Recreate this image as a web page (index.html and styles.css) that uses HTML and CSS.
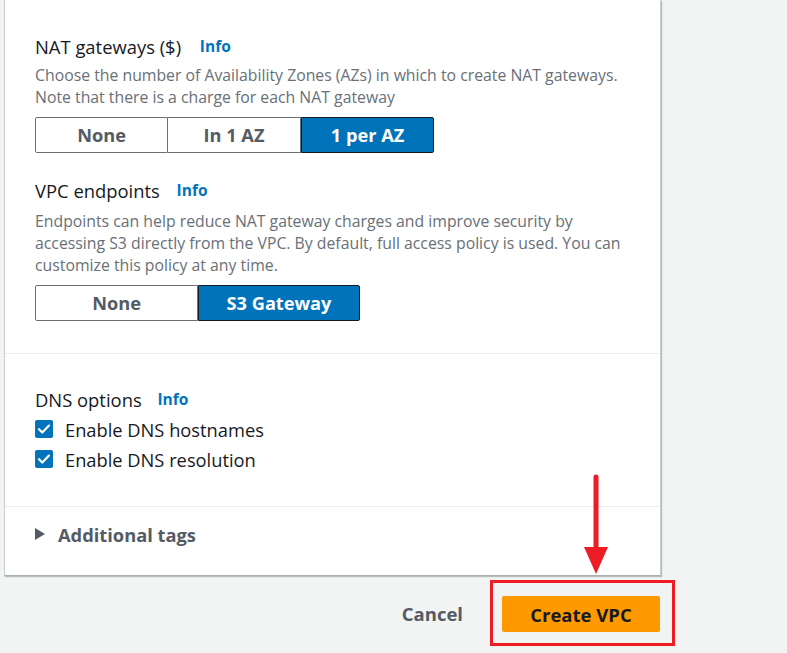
FILE: index.html
```html
<!DOCTYPE html>
<html lang="en">
<head>
<meta charset="utf-8">
<title>Create VPC</title>
<link rel="stylesheet" href="styles.css">
</head>
<body>
<div class="page">
  <div class="panel">
    <section class="sec sec-first">
      <div class="field-title">NAT gateways ($) <a class="info">Info</a></div>
      <p class="desc">Choose the number of Availability Zones (AZs) in which to create NAT gateways.<br>Note that there is a charge for each NAT gateway</p>
      <div class="seg seg-nat">
        <button class="seg-btn">None</button>
        <button class="seg-btn">In 1 AZ</button>
        <button class="seg-btn on">1 per AZ</button>
      </div>
      <div class="field-title t2">VPC endpoints <a class="info">Info</a></div>
      <p class="desc">Endpoints can help reduce NAT gateway charges and improve security by<br>accessing S3 directly from the VPC. By default, full access policy is used. You can<br>customize this policy at any time.</p>
      <div class="seg seg-vpc">
        <button class="seg-btn">None</button>
        <button class="seg-btn on">S3 Gateway</button>
      </div>
    </section>
    <section class="sec sec-dns">
      <div class="field-title">DNS options <a class="info">Info</a></div>
      <label class="cb"><span class="box"><svg viewBox="0 0 18 18" width="18" height="18"><path d="M4 9.2l3.3 3.3L14 5.6" fill="none" stroke="#fff" stroke-width="2.2" stroke-linecap="round" stroke-linejoin="round"/></svg></span>Enable DNS hostnames</label>
      <label class="cb"><span class="box"><svg viewBox="0 0 18 18" width="18" height="18"><path d="M4 9.2l3.3 3.3L14 5.6" fill="none" stroke="#fff" stroke-width="2.2" stroke-linecap="round" stroke-linejoin="round"/></svg></span>Enable DNS resolution</label>
    </section>
    <section class="sec sec-tags">
      <div class="expander"><span class="caret"></span>Additional tags</div>
    </section>
  </div>
  <div class="footer">
    <button class="cancel">Cancel</button>
    <div class="highlight">
      <button class="primary">Create VPC</button>
    </div>
  </div>
  <svg class="arrow" width="30" height="104" viewBox="0 0 30 104">
    <line x1="15" y1="4" x2="15" y2="78" stroke="#ee1c25" stroke-width="5" stroke-linecap="round"/>
    <polygon points="3,74 27,74 15,101" fill="#ee1c25"/>
  </svg>
</div>
</body>
</html>
```
FILE: styles.css
```css
* { box-sizing: border-box; }
html, body { margin: 0; padding: 0; }
body {
  background: #f2f3f3;
  font-family: "Open Sans", "Noto Sans", Arial, sans-serif;
  color: #16191f;
  width: 787px;
  height: 653px;
  overflow: hidden;
}
.page {
  position: relative;
  padding-left: 4px;
}
.panel {
  width: 657px;
  background: #fff;
  border-left: 1px solid #c8cdd0;
  border-right: 1px solid #c8cdd0;
  border-bottom: 1px solid #a9b0b3;
  box-shadow: 1px 1px 1px rgba(0,28,36,0.25);
}
.sec { padding: 0 30px; }
.sec + .sec { border-top: 1px solid #eaeded; }
.sec-first { padding-top: 35px; padding-bottom: 32px; }
.sec-dns { padding-top: 34px; padding-bottom: 32px; }
.sec-tags { padding-top: 16px; padding-bottom: 30px; }
.field-title {
  display: flex;
  align-items: center;
  height: 22px;
  font-size: 18.4px;
  color: #16191f;
  white-space: pre;
}
.field-title.t2 { margin-top: 26px; }
.info {
  font-size: 15.5px;
  font-weight: 700;
  color: #0073bb;
  margin-left: 12px;
}
.sec-first .field-title:first-child .info { margin-left: 14px; }
.sec-dns .info { margin-left: 11px; }
.desc {
  margin: 7px 0 0;
  font-size: 15.8px;
  line-height: 22px;
  color: #687078;
}
.t2 + .desc { margin-top: 9px; }
.seg {
  display: flex;
  margin-top: 9px;
}
.seg-btn {
  height: 36px;
  border: 1px solid #687078;
  background: #fff;
  color: #545b64;
  font-family: inherit;
  font-size: 18.2px;
  font-weight: 700;
  padding: 0;
  margin: 0;
}
.seg-btn + .seg-btn { border-left: none; }
.seg-btn:first-child { border-radius: 2px 0 0 2px; }
.seg-btn:last-child { border-radius: 0 2px 2px 0; }
.seg-btn.on {
  background: #0073bb;
  color: #fff;
  border: 1px solid #16191f;
}
.seg-nat .seg-btn { width: 133px; }
.seg-vpc .seg-btn { width: 163px; }
.seg-vpc .seg-btn.on { width: 162px; }
.cb {
  display: flex;
  align-items: center;
  height: 30px;
  font-size: 18.3px;
  color: #16191f;
}
.sec-dns .field-title + .cb { margin-top: 4px; }
.box {
  width: 18px;
  height: 18px;
  background: #0073bb;
  border-radius: 2px;
  margin-right: 12px;
  display: flex;
}
.expander {
  display: flex;
  align-items: center;
  height: 22px;
  font-size: 18.3px;
  font-weight: 700;
  color: #545b64;
}
.caret {
  width: 0;
  height: 0;
  border-top: 6px solid transparent;
  border-bottom: 6px solid transparent;
  border-left: 10px solid #545b64;
  margin-right: 13px;
}
.footer {
  display: flex;
  justify-content: flex-end;
  align-items: center;
  width: 671px;
  margin-top: 4px;
}
.cancel {
  border: none;
  background: none;
  font-family: inherit;
  font-size: 18.5px;
  font-weight: 700;
  color: #545b64;
  padding: 0 20px;
  margin-right: 7px;
  height: 36px;
}
.highlight {
  border: 3px solid #ee1c25;
  padding: 13px 12px 11px 9px;
}
.primary {
  display: block;
  width: 158px;
  height: 36px;
  border: none;
  border-radius: 2px;
  background: #ff9900;
  color: #16191f;
  font-family: inherit;
  font-size: 18.5px;
  font-weight: 700;
}
.arrow {
  position: absolute;
  left: 581px;
  top: 473px;
}
```
